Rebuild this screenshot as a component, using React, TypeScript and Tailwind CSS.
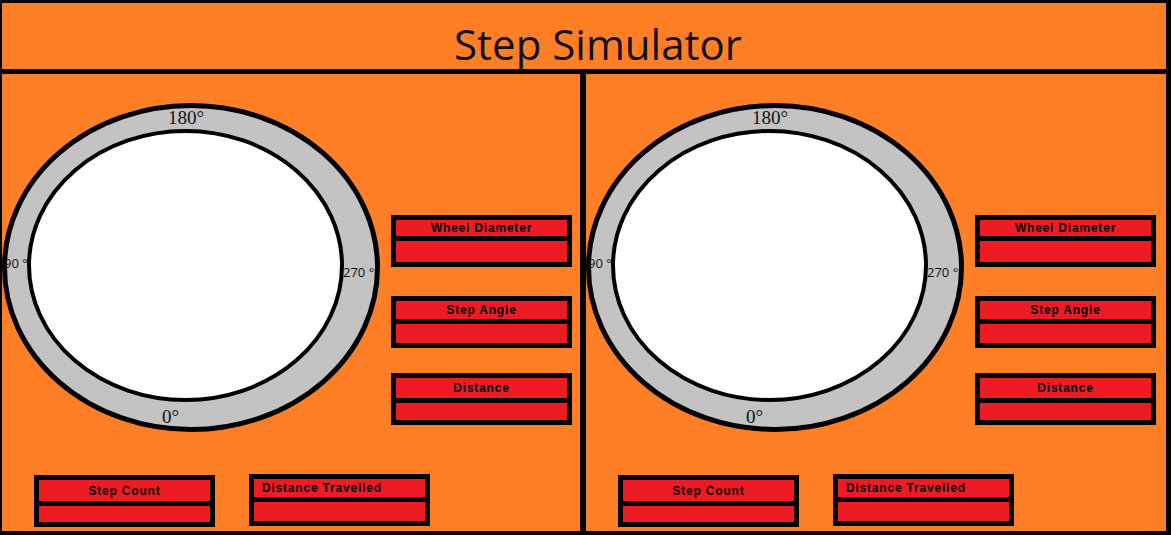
import React from "react";

interface FieldBoxProps {
  label: string;
  labelH: string;
  align?: "center" | "left";
}

const FieldBox = ({ label, labelH, align = "center" }: FieldBoxProps) => {
  return (
    <div className="w-[181px] h-[52px] border-[5px] border-black bg-black flex flex-col gap-[5px] shrink-0">
      <div
        className={`${labelH} bg-[#ED1C24] flex items-center ${
          align === "left" ? "justify-start pl-[8px]" : "justify-center"
        } font-['Liberation_Sans',sans-serif] font-bold text-[12px] tracking-[0.8px] text-black leading-none`}
      >
        {label}
      </div>
      <div className="flex-1 bg-[#ED1C24]"></div>
    </div>
  );
};

const Dial = () => {
  return (
    <svg width="382" height="360" viewBox="0 0 382 360" className="shrink-0 block">
      <ellipse cx="189" cy="193.5" rx="186.5" ry="162" fill="#C3C3C3" stroke="#000" strokeWidth="5" />
      <ellipse cx="183.5" cy="191.5" rx="156.5" ry="134.5" fill="#fff" stroke="#000" strokeWidth="4" />
      <text x="166" y="50" fontFamily="'Liberation Serif', serif" fontSize="19" fill="#111">
        180°
      </text>
      <text x="160" y="349" fontFamily="'Liberation Serif', serif" fontSize="19" fill="#111">
        0°
      </text>
      <text x="2" y="194" fontFamily="'Open Sans', sans-serif" fontSize="13" fill="#111">
        90 °
      </text>
      <text x="341" y="203" fontFamily="'Open Sans', sans-serif" fontSize="13" fill="#111">
        270 °
      </text>
    </svg>
  );
};

const Panel = ({ width }: { width: string }) => {
  return (
    <div className={`${width} h-full bg-[#FF7F27] flex flex-col`}>
      {/* Dial and setting inputs */}
      <div className="flex flex-row items-start">
        <Dial />
        <div className="flex flex-col ml-[7px] pt-[141px]">
          <FieldBox label="Wheel Diameter" labelH="h-[16px]" />
          <div className="h-[29px]"></div>
          <FieldBox label="Step Angle" labelH="h-[18px]" />
          <div className="h-[25px]"></div>
          <FieldBox label="Distance" labelH="h-[20px]" />
        </div>
      </div>

      {/* Bottom readouts */}
      <div className="flex flex-row items-start mt-[40px] pl-[32px] gap-[34px]">
        <div className="mt-[1px]">
          <FieldBox label="Step Count" labelH="h-[21px]" />
        </div>
        <FieldBox label="Distance Travelled" labelH="h-[18px]" align="left" />
      </div>
    </div>
  );
};

const App = () => {
  return (
    <div className="w-[1171px] h-[535px] bg-black flex flex-col pt-[3px] pl-[2px] pr-[5px] pb-[4px] gap-[5px]">
      <div className="h-[66px] bg-[#FF7F27] flex justify-center items-start pt-[20px] pl-[28px] shrink-0">
        <div className="font-['Open_Sans',sans-serif] text-[42px] leading-none text-[#111]">Step Simulator</div>
      </div>
      <div className="flex-1 flex flex-row gap-[6px]">
        <Panel width="w-[578px]" />
        <Panel width="w-[580px]" />
      </div>
    </div>
  );
};

export default App;
